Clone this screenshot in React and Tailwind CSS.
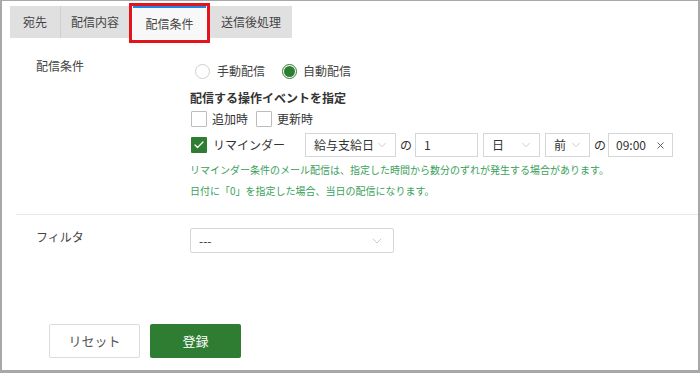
import { ChevronDown, Check, X } from "lucide-react";

const font = { fontFamily: '"Noto Sans CJK JP", "Noto Sans", sans-serif' };

/*
| TABS
*/
const Tabs = () => (
  <div className="flex items-start pl-[8px] pt-[2px] h-[42px]">
    <div className="mt-[3px] h-[32px] w-[50px] flex items-center justify-center bg-[#e0e0e0] text-[12px] text-[#444]">宛先</div>
    <div className="mt-[3px] h-[32px] w-[69px] flex items-center justify-center bg-[#e0e0e0] border-l border-[#d0d0d0] text-[12px] text-[#444]">配信内容</div>
    <div className="h-[40px] w-[81px] border-[3px] border-[#e5141c] px-[1px]">
      <div className="h-[33px] w-full flex items-center justify-center bg-[#f8f8f8] border-t-2 border-[#1e88e5] text-[12px] text-[#444]">配信条件</div>
    </div>
    <div className="mt-[3px] h-[32px] w-[82px] flex items-center justify-center bg-[#e0e0e0] text-[12px] text-[#444]">送信後処理</div>
  </div>
);

const Select = ({ label, w }) => (
  <div className={`h-[24px] ${w} flex items-center justify-between border border-[#d6d6d6] bg-white pl-[8px] pr-[6px] text-[12px] text-[#333]`}>
    <span>{label}</span>
    <ChevronDown className="w-[14px] h-[14px] text-[#c8c8c8]" strokeWidth={1.5} />
  </div>
);

const Box = ({ checked }) =>
  checked ? (
    <span className="shrink-0 w-[16px] h-[16px] flex items-center justify-center bg-[#2e7d32] rounded-[1px]">
      <Check className="w-[12px] h-[12px] text-white" strokeWidth={2.5} />
    </span>
  ) : (
    <span className="shrink-0 block w-[16px] h-[16px] border border-[#bdbdbd] bg-white rounded-[1px]"></span>
  );

export default function App() {
  return (
    <div style={font} className="w-[700px] h-[373px] bg-white border-x-[2px] border-b-[3px] border-t border-[#a8a8a8] flex flex-col text-[#333]">
      <Tabs />

      {/* DELIVERY CONDITIONS */}
      <div className="flex pt-[14px]">
        <div className="w-[188px] pl-[34px] text-[12px] text-[#444]">配信条件</div>
        <div className="flex flex-col">
          <div className="flex items-center h-[22px] mt-[3px] text-[12px]">
            <span className="ml-[5px] w-[15px] h-[15px] rounded-full border border-[#cfcfcf] bg-white"></span>
            <span className="ml-[7px] text-[#444]">手動配信</span>
            <span className="ml-[17px] w-[15px] h-[15px] rounded-full border border-[#2e7d32] flex items-center justify-center">
              <span className="w-[11px] h-[11px] rounded-full bg-[#2e7d32]"></span>
            </span>
            <span className="ml-[6px] text-[#444]">自動配信</span>
          </div>
          <div className="mt-[7px] text-[12px] font-bold text-[#333]">配信する操作イベントを指定</div>
          <div className="flex items-center mt-[3px] text-[12px] h-[18px] pl-[1px]">
            <Box />
            <span className="ml-[5px]">追加時</span>
            <span className="ml-[8px]"><Box /></span>
            <span className="ml-[5px]">更新時</span>
          </div>
          <div className="flex items-center mt-[5px] h-[24px] text-[12px] pl-[1px]">
            <Box checked />
            <span className="ml-[6px] w-[92px]">リマインダー</span>
            <Select label="給与支給日" w="w-[91px]" />
            <span className="ml-[4px] mr-[3px]">の</span>
            <div className="h-[24px] w-[63px] border border-[#d6d6d6] pl-[8px] flex items-center">1</div>
            <span className="ml-[5px]"><Select label="日" w="w-[57px]" /></span>
            <span className="ml-[5px]"><Select label="前" w="w-[45px]" /></span>
            <span className="ml-[4px] mr-[2px]">の</span>
            <div className="h-[24px] w-[65px] border border-[#d6d6d6] pl-[7px] pr-[6px] flex items-center justify-between">
              <span>09:00</span>
              <X className="w-[11px] h-[11px] text-[#555]" strokeWidth={2} />
            </div>
          </div>
          <div className="mt-[6px] text-[10px] text-[#3aa15a] leading-[14px]">リマインダー条件のメール配信は、指定した時間から数分のずれが発生する場合があります。</div>
          <div className="mt-[7px] text-[10px] text-[#3aa15a] leading-[14px]">日付に「0」を指定した場合、当日の配信になります。</div>
        </div>
      </div>

      <div className="ml-[14px] mt-[16px] border-t border-[#e8e8e8]"></div>

      {/* FILTER */}
      <div className="flex pt-[13px]">
        <div className="w-[188px] pl-[34px] text-[12px] text-[#444]">フィルタ</div>
        <div className="h-[25px] w-[204px] flex items-center justify-between border border-[#d6d6d6] rounded-[2px] pl-[8px] pr-[8px] text-[12px]">
          <span>---</span>
          <ChevronDown className="w-[16px] h-[16px] text-[#c8c8c8]" strokeWidth={1.5} />
        </div>
      </div>

      {/* ACTIONS */}
      <div className="flex gap-[10px] pl-[47px] mt-auto mb-[12px]">
        <button className="h-[34px] w-[91px] border border-[#dcdcdc] bg-white text-[13px] text-[#555] rounded-[2px]">リセット</button>
        <button className="h-[34px] w-[91px] bg-[#2e7d32] text-[13px] text-white rounded-[2px]">登録</button>
      </div>
    </div>
  );
}
